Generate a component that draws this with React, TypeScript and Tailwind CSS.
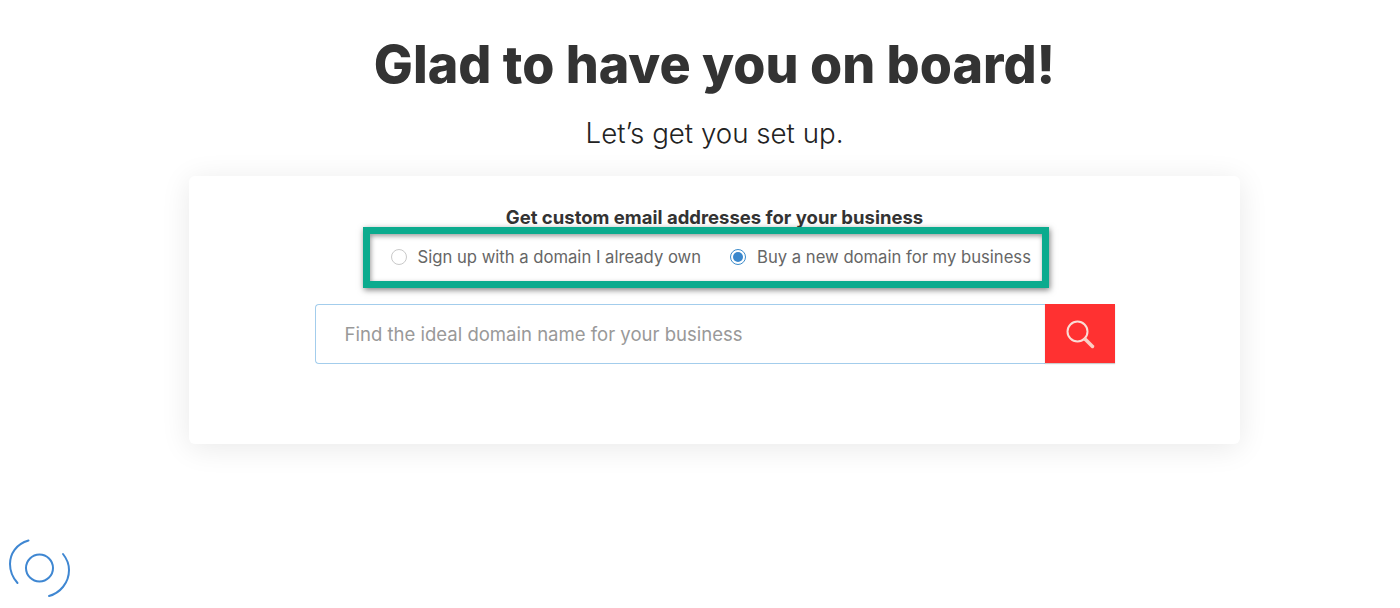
import React from "react";

function RadioOption({ label, checked }: { label: string; checked?: boolean }) {
  return (
    <label className="flex items-center gap-[11px]">
      {checked ? (
        <span className="flex h-4 w-4 items-center justify-center rounded-full border border-[#3d8ccb] bg-white">
          <span className="h-[10px] w-[10px] rounded-full bg-[#3a87cc]" />
        </span>
      ) : (
        <span className="h-4 w-4 rounded-full border border-[#c9c9c9] bg-white" />
      )}
      <span>{label}</span>
    </label>
  );
}

export default function App() {
  return (
    <div className="relative h-[608px] w-[1400px] overflow-hidden bg-white font-['Inter',sans-serif]">
      <div className="ml-[189px] flex w-[1051px] flex-col items-center">
        <h1 className="mt-[32px] text-[52px] leading-[66px] font-extrabold text-[#333333]">
          Glad to have you on board!
        </h1>
        <p className="mt-[17px] text-[27.7px] leading-[36px] font-light text-[#222222]">
          Let’s get you set up.
        </p>

        <div className="mt-[25px] flex h-[268px] w-full flex-col items-center rounded-md bg-white pt-[30px] shadow-[0_4px_30px_rgba(0,0,0,0.09)]">
          <h2 className="text-[18.5px] leading-[22px] font-bold text-[#333333]">
            Get custom email addresses for your business
          </h2>

          <div className="mt-[-1px] mr-[18px] flex h-[61px] w-[686px] items-center gap-[29px] border-[7px] border-[#0bab8e] pl-[21px] text-[16.65px] text-[#666666] shadow-[1px_2px_6px_rgba(0,0,0,0.5),inset_1px_2px_5px_rgba(0,0,0,0.4)]">
            <RadioOption label="Sign up with a domain I already own" />
            <RadioOption label="Buy a new domain for my business" checked />
          </div>

          <div className="mt-4 flex h-[60px] w-[800px]">
            <div className="flex flex-1 items-center rounded-l-[4px] border border-r-0 border-[#a3cdec] pt-[1px] pl-[29px] text-[18.55px] text-[#999999]">
              Find the ideal domain name for your business
            </div>
            <button className="flex h-[59px] w-[70px] items-center justify-center bg-[#ff3131] shadow-[0_1px_1px_rgba(0,0,0,0.2)]">
              <svg width="30" height="30" viewBox="0 0 30 30" fill="none">
                <circle cx="12.5" cy="12.5" r="10" stroke="#fbdcd5" strokeWidth="2" />
                <path d="M20 20l7.5 7.5" stroke="#fbcfc4" strokeWidth="3.5" strokeLinecap="round" />
              </svg>
            </button>
          </div>
        </div>
      </div>

      {/* loading widget in the corner */}
      <svg className="absolute left-[8px] top-[538px]" width="64" height="60" viewBox="0 0 64 60" fill="none" stroke="#3f87d2" strokeLinecap="round">
        <circle cx="31.5" cy="30" r="13.5" strokeWidth="2" />
        <path d="M20.5 2.5C8 6 2 16 2 26c0 8 3 14 7.5 19" strokeWidth="2" />
        <path d="M55 16c4 5 6 10 6 16 0 13-9 23-20 26" strokeWidth="2" />
      </svg>
    </div>
  );
}
